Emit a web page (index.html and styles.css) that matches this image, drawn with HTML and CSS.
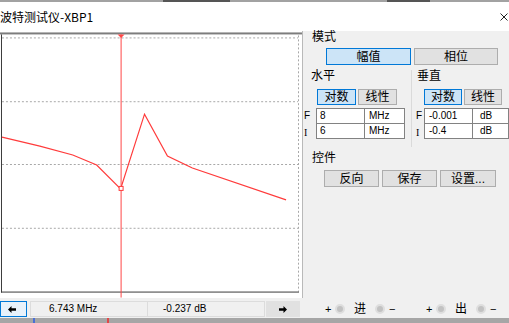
FILE: index.html
```html
<!DOCTYPE html>
<html lang="zh-CN">
<head>
    <meta charset="UTF-8">
    <title>波特测试仪-XBP1</title>
    <link rel="stylesheet" href="styles.css">
</head>
<body>
    <div class="desk-top"><span class="seg seg-a"></span><span class="seg seg-b"></span></div>

    <div class="titlebar">
        <span class="title">波特测试仪-XBP1</span>
        <svg class="close" width="8" height="8" viewBox="0 0 8 8">
            <path d="M0.5 0.5 L7.5 7.5 M7.5 0.5 L0.5 7.5" stroke="#222" stroke-width="1" fill="none"/>
        </svg>
    </div>

    <div class="main">
        <svg class="plot" width="303" height="267" viewBox="0 0 303 267">
            <rect x="0" y="1" width="303" height="2" fill="#7d7d7d"/>
            <!-- grid -->
            <g stroke="#a8a8a8" stroke-width="1" stroke-dasharray="2 2">
                <line x1="2" y1="6.5" x2="299" y2="6.5"/>
                <line x1="2" y1="70.5" x2="299" y2="70.5"/>
                <line x1="2" y1="133.5" x2="299" y2="133.5"/>
                <line x1="2" y1="197.5" x2="299" y2="197.5"/>
                <line x1="299.5" y1="4" x2="299.5" y2="261"/>
            </g>
            <line x1="1.5" y1="3" x2="1.5" y2="262" stroke="#3a3a3a"/>
            <line x1="1" y1="261.5" x2="300" y2="261.5" stroke="#3a3a3a"/>
            <!-- curve -->
            <polyline points="2,106 40,115 73,124 97,134 121,158 145,83 168,125 193,137 287,169"
                      fill="none" stroke="#ff3b3b" stroke-width="1.2"/>
            <!-- cursor -->
            <line x1="121.5" y1="3" x2="121.5" y2="267" stroke="#ff4646" stroke-width="1"/>
            <path d="M118 3 L125 3 L121.5 6.5 Z" fill="#ff4646"/>
            <rect x="119.5" y="155.5" width="4" height="4" fill="#fff" stroke="#ff3b3b" stroke-width="1"/>
        </svg>

        <div class="panel">
            <div class="label">模式</div>
            <div class="mode-row">
                <div class="btn on mode-a">幅值</div>
                <div class="btn mode-b">相位</div>
            </div>

            <div class="axes">
                <div class="axis axis-h">
                    <div class="label">水平</div>
                    <div class="scale-row">
                        <div class="btn on">对数</div>
                        <div class="btn">线性</div>
                    </div>
                    <div class="fields">
                        <div class="field-row">
                            <span class="tag">F</span>
                            <span class="val">8</span>
                            <span class="unit">MHz</span>
                        </div>
                        <div class="field-row">
                            <span class="tag tag-i">I</span>
                            <span class="val">6</span>
                            <span class="unit">MHz</span>
                        </div>
                    </div>
                </div>
                <div class="axis axis-v">
                    <div class="label">垂直</div>
                    <div class="scale-row">
                        <div class="btn on">对数</div>
                        <div class="btn">线性</div>
                    </div>
                    <div class="fields">
                        <div class="field-row">
                            <span class="tag">F</span>
                            <span class="val">-0.001</span>
                            <span class="unit">dB</span>
                        </div>
                        <div class="field-row">
                            <span class="tag tag-i">I</span>
                            <span class="val">-0.4</span>
                            <span class="unit">dB</span>
                        </div>
                    </div>
                </div>
            </div>

            <div class="label ctrl-label">控件</div>
            <div class="ctrl-row">
                <div class="btn">反向</div>
                <div class="btn">保存</div>
                <div class="btn wide">设置...</div>
            </div>
        </div>
    </div>

    <div class="bottom">
        <div class="cursorbar">
            <div class="arrow-btn left">
                <svg width="8" height="7" viewBox="0 0 8 7"><path d="M0 3.5 L3.5 0 L3.5 2.3 L8 2.3 L8 4.7 L3.5 4.7 L3.5 7 Z" fill="#000"/></svg>
            </div>
            <div class="readout">6.743 MHz</div>
            <div class="readout second">-0.237 dB</div>
            <div class="arrow-btn right">
                <svg width="8" height="7" viewBox="0 0 8 7"><path d="M8 3.5 L4.5 0 L4.5 2.3 L0 2.3 L0 4.7 L4.5 4.7 L4.5 7 Z" fill="#000"/></svg>
            </div>
        </div>
        <div class="ports">
            <div class="port">
                <span class="sign">+</span><span class="radio"></span>
                <span class="port-name">进</span>
                <span class="radio"></span><span class="sign">−</span>
            </div>
            <div class="port">
                <span class="sign">+</span><span class="radio"></span>
                <span class="port-name">出</span>
                <span class="radio"></span><span class="sign">−</span>
            </div>
        </div>
    </div>

    <div class="desk-bottom"><span class="mark mark-a"></span><span class="mark mark-b"></span></div>
</body>
</html>
```

FILE: styles.css
```css
* {
    box-sizing: border-box;
}
body {
    margin: 0;
    width: 509px;
    height: 323px;
    overflow: hidden;
    background: #f0f0f0;
    font-family: "Liberation Sans", "Noto Sans CJK SC", sans-serif;
    font-size: 11px;
    color: #000;
}
.desk-top {
    height: 2px;
    background: #a2a2a2;
    display: flex;
}
.desk-top .seg {
    height: 2px;
    background: #555;
}
.seg-a {
    margin-left: 163px;
    width: 67px;
}
.seg-b {
    margin-left: 157px;
    width: 43px;
}
.titlebar {
    height: 29px;
    background: #fff;
    display: flex;
    align-items: center;
    justify-content: space-between;
    padding-right: 1px;
}
.title {
    font-family: "Noto Sans CJK SC", sans-serif;
    font-size: 12px;
    line-height: 14px;
    margin-left: 0;
}
.main {
    display: flex;
    height: 267px;
}
.plot {
    display: block;
    width: 303px;
    height: 267px;
    background: #fff;
}
.panel {
    flex: 1;
    border-left: 1px solid #b9b9b9;
}
.label {
    height: 12px;
    line-height: 12px;
    font-size: 12px;
    padding-left: 9px;
}
.btn {
    height: 17px;
    display: flex;
    align-items: center;
    justify-content: center;
    background: #e1e1e1;
    border: 1px solid #adadad;
    font-size: 12px;
    line-height: 12px;
}
.btn.on {
    background: #cce4f7;
    border-color: #0078d7;
}
.mode-row {
    display: flex;
    gap: 3px;
    margin-top: 5px;
    padding-left: 23px;
}
.mode-a {
    width: 85px;
}
.mode-b {
    width: 84px;
}
.axes {
    display: flex;
    margin-top: 5px;
}
.axis {
    padding-bottom: 8px;
}
.axis-h {
    width: 109px;
    border-right: 1px solid #dadada;
}
.axis-h .label {
    padding-left: 8px;
}
.axis-v {
    flex: 1;
}
.axis-v .label {
    padding-left: 5px;
}
.scale-row {
    display: flex;
    gap: 2px;
    margin-top: 7px;
    padding-left: 14px;
}
.scale-row .btn {
    width: 39px;
    height: 16px;
}
.axis-v .scale-row {
    padding-left: 12px;
}
.axis-v .scale-row .btn {
    width: 38px;
}
.fields {
    margin-top: 3px;
}
.field-row {
    display: flex;
    height: 16px;
}
.field-row + .field-row {
    margin-top: -1px;
}
.tag {
    width: 13px;
    padding-left: 1px;
    line-height: 16px;
    font-size: 10px;
}
.tag-i {
    font-family: "Liberation Serif", serif;
    padding-top: 2px;
}
.axis-v .tag {
    width: 12px;
    padding-left: 4px;
}
.val,
.unit {
    height: 16px;
    background: #fff;
    border: 1px solid #828282;
    line-height: 14px;
    font-size: 10px;
}
.val {
    width: 49px;
    padding-left: 3px;
}
.unit {
    width: 41px;
    margin-left: -1px;
    padding-left: 4px;
}
.axis-v .val {
    padding-left: 4px;
}
.axis-v .unit {
    width: 37px;
    padding-left: 7px;
}
.ctrl-label {
    margin-top: 5px;
}
.ctrl-row {
    display: flex;
    gap: 3px;
    margin-top: 6px;
    padding-left: 21px;
}
.ctrl-row .btn {
    width: 55px;
}
.ctrl-row .btn.wide {
    width: 56px;
}
.bottom {
    display: flex;
    height: 20px;
    padding-top: 3px;
}
.cursorbar {
    width: 303px;
    display: flex;
    align-items: flex-start;
}
.arrow-btn {
    height: 16px;
    display: flex;
    align-items: center;
    justify-content: center;
}
.arrow-btn svg {
    display: block;
}
.arrow-btn.left {
    width: 27px;
    margin-right: 3px;
    padding-right: 4px;
    border: 1px solid #0078d7;
    background: #e8f2fb;
}
.arrow-btn.right {
    width: 34px;
    margin-left: 1px;
    background: #e1e1e1;
}
.readout {
    width: 118px;
    height: 16px;
    border: 1px solid #dcdcdc;
    padding-left: 18px;
    line-height: 14px;
    font-size: 10px;
}
.readout.second {
    margin-left: -1px;
    padding-left: 15px;
}
.ports {
    flex: 1;
    display: flex;
    align-items: flex-start;
    gap: 31px;
    padding-left: 22px;
    padding-top: 1px;
}
.port {
    display: flex;
    align-items: center;
    height: 14px;
}
.sign {
    font-size: 11px;
    width: 6px;
    line-height: 14px;
}
.radio {
    width: 10px;
    height: 10px;
    margin: 0 4px;
    border-radius: 50%;
    background: #c2c2c2;
    border: 2px solid #dedede;
}
.port-name {
    font-size: 12px;
    line-height: 14px;
    margin: 0 5px;
}
.desk-bottom {
    height: 5px;
    background: #a6a6a6;
    display: flex;
}
.mark {
    height: 5px;
    width: 2px;
}
.mark-a {
    margin-left: 33px;
    background: #4a6fd6;
}
.mark-b {
    margin-left: 72px;
    background: #e04848;
}
```
